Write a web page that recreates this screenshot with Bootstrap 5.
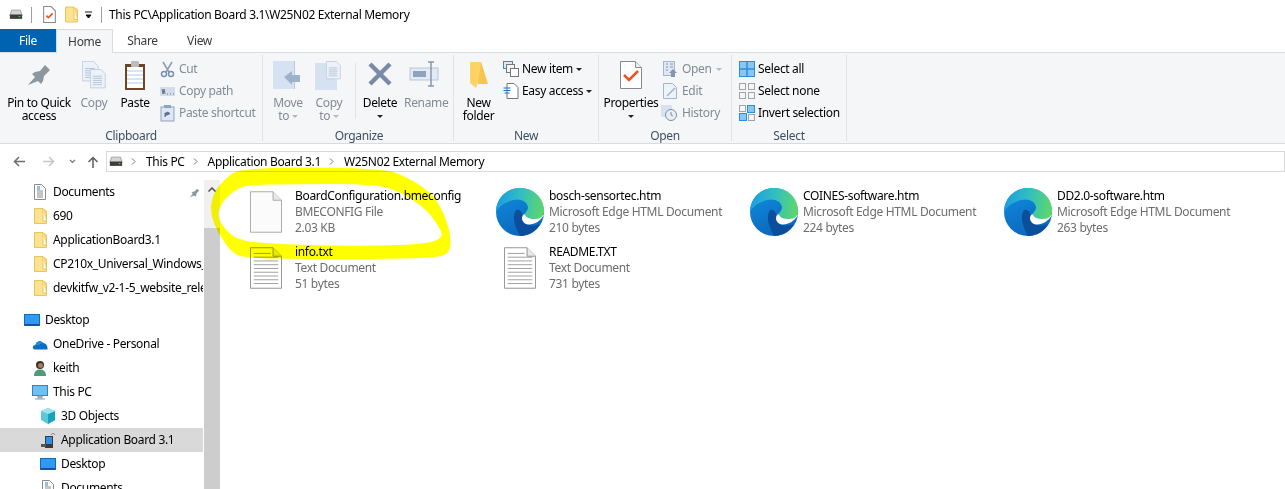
<!DOCTYPE html>
<html lang="en">
<head>
<meta charset="UTF-8">
<title>W25N02 External Memory</title>
<link rel="stylesheet" href="https://cdn.jsdelivr.net/npm/bootstrap@5.3.0/dist/css/bootstrap.min.css">
<style>
html, body { height: 489px; overflow: hidden; }
body { font-family: "Noto Sans", "Open Sans", sans-serif; font-size: 12px; letter-spacing: -.33px; color: #000; background: #fff; line-height: 16px; }
svg { display: block; flex: none; }

/* title bar */
.title-bar { height: 29px; padding-left: 9px; }
.title-sep { width: 1px; height: 16px; background: #a0a0a0; }
.qa-drive { margin-right: 8px; }
.qa-doc { margin-left: 11px; }
.qa-folder { margin-left: 9px; }
.qa-more { margin-left: 7px; }
.qa-sep { margin-left: 8px; }
.title-text { margin-left: 7px; }

/* tabs */
.tab-row { height: 24px; position: relative; z-index: 1; margin-bottom: -1px; }
.tab-item { height: 24px; line-height: 23px; text-align: center; color: #3b3b3b; }
.tab-file { width: 56px; height: 23px; background: #0063b1; color: #fff; }
.tab-home { width: 57px; background: #f5f6f7; border: 1px solid #dadbdc; border-bottom: 0; }
.tab-share { width: 59px; }
.tab-view { width: 55px; }

/* ribbon */
.ribbon { height: 92px; background: #f5f6f7; border-top: 1px solid #dadbdc; border-bottom: 1px solid #dadbdc; padding-top: 2px; }
.rib-group { height: 86px; border-right: 1px solid #e1e3e6; flex: none; }
.rib-body { height: 73px; }
.rib-label { height: 16px; line-height: 15px; text-align: center; color: #3f4f63; }
.big-btn { padding-top: 6px; line-height: 13px; text-align: center; flex: none; }
.big-icon { height: 35px; }
.bw-32 { width: 32px; } .bw-36 { width: 36px; } .bw-40 { width: 40px; } .bw-46 { width: 46px; }
.bw-48 { width: 48px; } .bw-49 { width: 49px; } .bw-50 { width: 50px; } .bw-64 { width: 64px; } .bw-78 { width: 78px; }
.off { color: #838b96; }
.caret-dn { width: 0; height: 0; border-left: 3px solid transparent; border-right: 3px solid transparent; border-top: 3px solid #222; display: inline-block; vertical-align: middle; }
.off .caret-dn { border-top-color: #b5b9bf; }
.small-col { padding-top: 3px; flex: none; }
.small-row { height: 22px; gap: 4px; white-space: nowrap; }
.tight-row { gap: 3px; }
.hist-row { margin-left: -2px; }
.inner-sep { width: 1px; height: 56px; margin-top: 8px; margin-left: 8px; background: #e1e3e6; flex: none; }
.g-clip { width: 263px; }
.g-org { width: 191px; padding-left: 2px; }
.g-new { width: 145px; }
.g-open { width: 133px; }
.g-sel { width: 115px; }
.sel-body { padding-left: 7px; }

/* address bar */
.addr-row { height: 33px; padding-top: 7px; }
.nav-btns { width: 106px; height: 21px; padding-left: 13px; flex: none; }
.nav-fwd { margin-left: 18px; }
.nav-more { margin-left: 14px; }
.nav-up { margin-left: 11px; }
.addr-box { height: 21px; border: 1px solid #d9d9d9; padding-left: 2px; }
.crumb-sep { width: 5px; height: 7px; margin: 0 10px 0 8px; }

/* main area */
.main-area { height: 312px; }
.side-pane { width: 204px; padding-top: 3px; overflow: hidden; flex: none; }
.side-row { height: 24px; width: 203px; white-space: nowrap; overflow: hidden; gap: 5px; }
.side-ico { width: 16px; flex: none; display: flex; justify-content: center; }
.lvl-0 { padding-left: 24px; }
.lvl-1 { padding-left: 32px; }
.lvl-2 { padding-left: 40px; }
.side-gap { height: 8px; }
.side-sel { background: #d9d9d9; }
.pin-mark { margin-left: auto; margin-right: 3px; }
.scroll-bar { width: 16px; margin-top: 3px; background: #f0f0f0; flex: none; }
.scroll-up { height: 18px; }
.scroll-blank { height: 30px; }
.scroll-thumb { flex: 1; background: #cdcdcd; }
.file-pane { padding: 11px 0 0 22px; display: grid; grid-template-columns: repeat(4, 254px); grid-auto-rows: 56px; }
.file-tile { gap: 5px; height: 48px; }
.file-icon { width: 48px; height: 48px; }
.file-meta { color: #6d6d6d; }

.marker { position: absolute; left: 0; top: 0; mix-blend-mode: multiply; pointer-events: none; }
</style>
</head>
<body>
<svg width="0" height="0" class="position-absolute">
  <defs>
    <linearGradient id="edgeTop" x1="0" y1="0.5" x2="1" y2="0.6">
      <stop offset="0" stop-color="#1b9de2"/><stop offset=".5" stop-color="#33bfc0"/><stop offset="1" stop-color="#5fd768"/>
    </linearGradient>
    <linearGradient id="edgeLeft" x1="0" y1="0" x2="0.4" y2="1">
      <stop offset="0" stop-color="#0f8fdf"/><stop offset="1" stop-color="#0c68bd"/>
    </linearGradient>
    <symbol id="ic-drive" viewBox="0 0 16 12">
      <path d="M3 1h10l2 6H1z" fill="#d5d5d5" stroke="#9c9c9c"/>
      <rect x="1" y="6" width="14" height="5" fill="#3d3d3d"/>
      <rect x="11" y="8" width="2" height="1" fill="#5fe05f"/>
    </symbol>
    <symbol id="ic-folder" viewBox="0 0 13 16">
      <path d="M.5.5h8.500v12.500l3.500 0v2.500H.5z" fill="#fde28f" stroke="#e8c45e"/>
      <path d="M9 1l3.500 2v12" fill="#f8d775" stroke="#e8c45e"/>
    </symbol>
    <symbol id="ic-doc" viewBox="0 0 12 16">
      <path d="M.5.5h7l4 4v11H.5z" fill="#fff" stroke="#8a8a8a"/>
      <path d="M3 7h6M3 9h6M3 11h6M3 13h6" stroke="#8a8a8a"/>
      <path d="M3 3h3M3 5h3" stroke="#2a7cc7"/>
    </symbol>
    <symbol id="ic-desk" viewBox="0 0 16 12">
      <rect x=".5" y=".5" width="15" height="11" fill="#2e9bf0" stroke="#0a6dc0"/>
      <rect x="1" y="10" width="14" height="1.500" fill="#0b4f8f"/>
    </symbol>
    <symbol id="ic-pin" viewBox="0 0 24 26">
      <path d="M1 24l7-8-3-3 3-2 5-1 5-6 5 5-6 6-1 5-2 3-3-3z" fill="#8b969f"/>
    </symbol>
    <symbol id="ic-file" viewBox="0 0 34 44">
      <path d="M.5.5h24l9 9v34H.500z" fill="#fbfbfb" stroke="#a5a5a5"/>
      <path d="M24.500.5v9h9" fill="#e8e8e8" stroke="#a5a5a5"/>
    </symbol>
    <symbol id="ic-text" viewBox="0 0 34 44">
      <path d="M.5.5h24l9 9v34H.500z" fill="#fff" stroke="#8f8f8f"/>
      <path d="M24.500.5v9h9" fill="#e8e8e8" stroke="#8f8f8f"/>
      <path d="M4 6.500h18M4 10.500h26M4 14.500h26M4 18.500h26M4 22.500h26M4 26.500h26M4 30.500h26M4 34.500h26M4 38.500h26" stroke="#9b9b9b"/>
    </symbol>
    <symbol id="ic-edge" viewBox="0 0 48 48">
      <circle cx="24" cy="24" r="24" fill="url(#edgeLeft)"/>
      <path d="M20 22C25 21 27 26 27 30C28 36 35 40 44 36C40 43 33 48 24 48C20 40 15 30 20 22Z" fill="#0b4f9c"/>
      <path d="M48 27C44 34 36 38 30 36C26 34 25 30 27 27C33 24 42 28 48 27Z" fill="#fff"/>
      <path d="M0 24C0 10 11 0 24 0C38 0 48 10 48 23C48 28 45 31 39 31C33 31 29 29 29 26C29 24 32 23 32 19C31 13 24 10 17 12C9 14 3 18 0 24Z" fill="url(#edgeTop)"/>
    </symbol>
    <symbol id="ic-page-blue" viewBox="0 0 24 28">
      <path d="M.5.5h15l6 6v20H.500z" fill="#edf2f9" stroke="#b4c4dc"/>
      <path d="M4 10h13M4 13h13M4 16h13M4 19h13M4 22h13" stroke="#9fb3cf"/>
    </symbol>
    <symbol id="ic-panel" viewBox="0 0 26 28">
      <rect width="22" height="28" fill="#d6e2f1"/><rect width="1" height="28" x="21" fill="#b8cae0"/>
    </symbol>
    <symbol id="ic-chev" viewBox="0 0 5 7">
      <path d="M1 .5l3 3-3 3" fill="none" stroke="#777"/>
    </symbol>
  </defs>
</svg>

<div class="title-bar d-flex align-items-center">
  <svg width="14" height="11" class="qa-drive"><use href="#ic-drive"/></svg>
  <span class="title-sep"></span>
  <svg width="13" height="17" viewBox="0 0 12 16" class="qa-doc"><path d="M.5.5h7l4 4v11H.5z" fill="#fff" stroke="#8a8a8a"/><path d="M3 9l2 2 4-4" fill="none" stroke="#e8541e" stroke-width="1.500"/></svg>
  <svg width="13" height="17" class="qa-folder"><use href="#ic-folder"/></svg>
  <svg width="8" height="8" viewBox="0 0 8 8" class="qa-more"><path d="M0 1h7M1 4h5l-2.500 3z" stroke="#111" fill="#111"/></svg>
  <span class="title-sep qa-sep"></span>
  <span class="title-text">This PC\Application Board 3.1\W25N02 External Memory</span>
</div>

<div class="tab-row d-flex">
  <div class="tab-item tab-file">File</div>
  <div class="tab-item tab-home">Home</div>
  <div class="tab-item tab-share">Share</div>
  <div class="tab-item tab-view">View</div>
</div>

<div class="ribbon d-flex">
  <div class="rib-group g-clip">
    <div class="rib-body d-flex">
      <div class="big-btn bw-78">
        <div class="big-icon d-flex justify-content-center"><svg width="24" height="26"><use href="#ic-pin"/></svg></div>
        Pin to Quick<br>access
      </div>
      <div class="big-btn off bw-32">
        <div class="big-icon d-flex justify-content-center"><svg width="24" height="28" viewBox="0 0 24 28"><use href="#ic-page-blue" width="18" height="21"/><use href="#ic-page-blue" x="8" y="8" width="17" height="20"/></svg></div>
        Copy
      </div>
      <div class="big-btn bw-50">
        <div class="big-icon d-flex justify-content-center"><svg width="22" height="30" viewBox="0 0 22 30"><rect x="1" y="3" width="20" height="26" fill="#6b4728"/><rect x="3" y="6" width="16" height="21" fill="#fff"/><path d="M3 10h16M3 14h16M3 18h16M3 22h16" stroke="#a8cbed"/><rect x="7" y="0" width="8" height="6" rx="1" fill="#bcbcbc"/></svg></div>
        Paste
      </div>
      <div class="small-col off">
        <div class="small-row d-flex align-items-center"><svg width="15" height="17" viewBox="0 0 15 17"><path d="M3 1l6 10M12 1l-6 10" stroke="#8a9bb5" stroke-width="1.500"/><circle cx="4" cy="13" r="2.500" fill="none" stroke="#7b8fb0" stroke-width="1.500"/><circle cx="11" cy="13" r="2.500" fill="none" stroke="#7b8fb0" stroke-width="1.500"/></svg>Cut</div>
        <div class="small-row d-flex align-items-center"><svg width="15" height="9" viewBox="0 0 15 9"><rect width="15" height="9" fill="#d2deee"/><path d="M2 2l1 5 1-5 1 5M7 7h1M10 7h1M13 7h1" stroke="#556" fill="none" stroke-width=".8"/></svg>Copy path</div>
        <div class="small-row d-flex align-items-center"><svg width="15" height="17" viewBox="0 0 15 17"><rect x="1" y="2" width="13" height="14" fill="#dde6f2" stroke="#8fa3bf"/><rect x="4" y="0" width="7" height="3" fill="#8fa3bf"/><path d="M5 12V8h4M7 7l3 1.500L7 10z" fill="#5c708c" stroke="#5c708c"/></svg>Paste shortcut</div>
      </div>
    </div>
    <div class="rib-label">Clipboard</div>
  </div>

  <div class="rib-group g-org">
    <div class="rib-body d-flex">
      <div class="big-btn off bw-46">
        <div class="big-icon d-flex justify-content-center"><svg width="30" height="30" viewBox="0 0 30 30"><use href="#ic-panel" width="26" height="28"/><path d="M11 16l8-6v4h8v7h-8v3z" fill="#9fb2cc"/></svg></div>
        Move<br>to <span class="caret-dn"></span>
      </div>
      <div class="big-btn off bw-36">
        <div class="big-icon d-flex justify-content-center"><svg width="28" height="30" viewBox="0 0 28 30"><rect y="2" width="22" height="27" fill="#d6e2f1"/><use href="#ic-page-blue" x="11" y="0" width="16" height="19"/></svg></div>
        Copy<br>to <span class="caret-dn"></span>
      </div>
      <div class="inner-sep"></div>
      <div class="big-btn bw-48">
        <div class="big-icon d-flex justify-content-center"><svg width="26" height="26" viewBox="0 0 26 26"><path d="M3 3l20 20M23 3L3 23" stroke="#7a8aa8" stroke-width="4.500"/></svg></div>
        Delete<br><span class="caret-dn"></span>
      </div>
      <div class="big-btn off bw-40">
        <div class="big-icon d-flex justify-content-center"><svg width="30" height="26" viewBox="0 0 30 26"><rect x="1" y="7" width="28" height="12" fill="#e2eaf5" stroke="#b8c6da"/><rect x="4" y="10" width="13" height="6" fill="#8fa2bf"/><path d="M19 1h6M22 1v24M19 25h6" stroke="#8a96a8" stroke-width="1.500"/></svg></div>
        Rename
      </div>
    </div>
    <div class="rib-label">Organize</div>
  </div>

  <div class="rib-group g-new">
    <div class="rib-body d-flex">
      <div class="big-btn bw-49">
        <div class="big-icon d-flex justify-content-center"><svg width="20" height="28" viewBox="0 0 20 28"><path d="M1 1h11l6 20h-9l-2 6-6-5z" fill="#fcd466"/><path d="M12 1l7 22H9z" fill="#f5c453"/></svg></div>
        New<br>folder
      </div>
      <div class="small-col">
        <div class="small-row tight-row d-flex align-items-center"><svg width="16" height="16" viewBox="0 0 16 16"><rect x=".5" y=".5" width="9" height="7" fill="#dbe9f7" stroke="#3b87c8"/><rect x="3.500" y="3.500" width="8" height="8" fill="#f4f4f4" stroke="#777"/><rect x="7.500" y="7.500" width="8" height="8" fill="#fff" stroke="#777"/></svg>New item <span class="caret-dn"></span></div>
        <div class="small-row tight-row d-flex align-items-center"><svg width="16" height="16" viewBox="0 0 15 16"><path d="M3.500.5h7l4 4v11h-11z" fill="#fff" stroke="#777"/><path d="M0 5h7M0 7.500h7M1 10h5" stroke="#1d6fb8"/></svg>Easy access <span class="caret-dn"></span></div>
      </div>
    </div>
    <div class="rib-label">New</div>
  </div>

  <div class="rib-group g-open">
    <div class="rib-body d-flex">
      <div class="big-btn bw-64">
        <div class="big-icon d-flex justify-content-center"><svg width="22" height="28" viewBox="0 0 22 28"><path d="M.5.5h15l6 6v21H.500z" fill="#fff" stroke="#8a8a8a"/><path d="M15.500.5v6h6" fill="#eee" stroke="#8a8a8a"/><path d="M4 14l5 5 9-9" fill="none" stroke="#e8541e" stroke-width="2.500"/></svg></div>
        Properties<br><span class="caret-dn"></span>
      </div>
      <div class="small-col off">
        <div class="small-row d-flex align-items-center"><svg width="15" height="16" viewBox="0 0 15 16"><rect x=".5" y=".5" width="11" height="14" fill="#dfe7f2" stroke="#a5b5cb"/><path d="M3 3h2M3 6h2M3 9h2M7 3h3M7 6h3" stroke="#8296b3"/><path d="M8 16v-4H6l4-4 4 4h-2v4z" fill="#8296b3"/></svg>Open <span class="caret-dn"></span></div>
        <div class="small-row d-flex align-items-center"><svg width="15" height="16" viewBox="0 0 15 16"><path d="M.5.5h9l4 4v11H.500z" fill="#eef3fa" stroke="#a5b5cb"/><path d="M4 13l8-8" stroke="#9fb2cc" stroke-width="1.500"/></svg>Edit</div>
        <div class="small-row hist-row d-flex align-items-center"><svg width="17" height="16" viewBox="0 0 17 16"><rect y="0" width="11" height="12" fill="#d6e2f1"/><circle cx="10" cy="10" r="5.500" fill="#e9eef5" stroke="#7f8ea3"/><path d="M10 7v3l2 1" stroke="#7f8ea3" fill="none"/></svg>History</div>
      </div>
    </div>
    <div class="rib-label">Open</div>
  </div>

  <div class="rib-group g-sel">
    <div class="rib-body sel-body d-flex">
      <div class="small-col">
        <div class="small-row tight-row d-flex align-items-center"><svg width="16" height="16" viewBox="0 0 16 16"><rect x=".5" y=".5" width="15" height="15" fill="#8cc4f2" stroke="#2a8ee0"/><path d="M8 0v16M0 8h16" stroke="#2a8ee0" stroke-width="1.500"/></svg>Select all</div>
        <div class="small-row tight-row d-flex align-items-center"><svg width="16" height="16" viewBox="0 0 16 16" fill="none" stroke="#a3a3a3"><rect x=".5" y=".5" width="6" height="6"/><rect x="9.500" y=".5" width="6" height="6"/><rect x=".5" y="9.500" width="6" height="6"/><rect x="9.500" y="9.500" width="6" height="6"/></svg>Select none</div>
        <div class="small-row tight-row d-flex align-items-center"><svg width="16" height="16" viewBox="0 0 16 16"><rect x=".5" y=".5" width="6" height="6" fill="none" stroke="#a3a3a3"/><rect x="8.500" y=".5" width="7" height="7" fill="#8cc4f2" stroke="#2a8ee0"/><rect x=".5" y="8.500" width="7" height="7" fill="#8cc4f2" stroke="#2a8ee0"/><rect x="9.500" y="9.500" width="6" height="6" fill="none" stroke="#a3a3a3"/></svg>Invert selection</div>
      </div>
    </div>
    <div class="rib-label">Select</div>
  </div>
</div>

<div class="addr-row d-flex">
  <div class="nav-btns d-flex align-items-center">
    <svg width="12" height="11" viewBox="0 0 12 11"><path d="M12 5.500H1.500M6 1L1.500 5.500 6 10" fill="none" stroke="#6d6d6d" stroke-width="1.500"/></svg>
    <svg width="12" height="11" viewBox="0 0 12 11" class="nav-fwd"><path d="M0 5.500h10.500M6 1l4.500 4.500L6 10" fill="none" stroke="#c6c6c6" stroke-width="1.500"/></svg>
    <svg width="7" height="5" viewBox="0 0 7 5" class="nav-more"><path d="M1 1l2.500 2.500L6 1" fill="none" stroke="#777" stroke-width="1.200"/></svg>
    <svg width="12" height="12" viewBox="0 0 11 12" class="nav-up"><path d="M5.500 12V1.500M1 6l4.500-4.500L10 6" fill="none" stroke="#5e5e5e" stroke-width="1.500"/></svg>
  </div>
  <div class="addr-box flex-grow-1 d-flex align-items-center">
    <svg width="14" height="11"><use href="#ic-drive"/></svg>
    <svg class="crumb-sep"><use href="#ic-chev"/></svg>
    <span>This PC</span>
    <svg class="crumb-sep"><use href="#ic-chev"/></svg>
    <span>Application Board 3.1</span>
    <svg class="crumb-sep"><use href="#ic-chev"/></svg>
    <span>W25N02 External Memory</span>
  </div>
</div>

<div class="main-area d-flex">
  <div class="side-pane">
    <div class="side-row lvl-1 d-flex align-items-center"><span class="side-ico"><svg width="12" height="16"><use href="#ic-doc"/></svg></span><span>Documents</span><svg class="pin-mark" width="11" height="11"><use href="#ic-pin"/></svg></div>
    <div class="side-row lvl-1 d-flex align-items-center"><span class="side-ico"><svg width="13" height="16"><use href="#ic-folder"/></svg></span><span>690</span></div>
    <div class="side-row lvl-1 d-flex align-items-center"><span class="side-ico"><svg width="13" height="16"><use href="#ic-folder"/></svg></span><span>ApplicationBoard3.1</span></div>
    <div class="side-row lvl-1 d-flex align-items-center"><span class="side-ico"><svg width="13" height="16"><use href="#ic-folder"/></svg></span><span>CP210x_Universal_Windows_Driver</span></div>
    <div class="side-row lvl-1 d-flex align-items-center"><span class="side-ico"><svg width="13" height="16"><use href="#ic-folder"/></svg></span><span>devkitfw_v2-1-5_website_release</span></div>
    <div class="side-gap"></div>
    <div class="side-row lvl-0 d-flex align-items-center"><span class="side-ico"><svg width="16" height="12"><use href="#ic-desk"/></svg></span><span>Desktop</span></div>
    <div class="side-row lvl-1 d-flex align-items-center"><span class="side-ico"><svg width="16" height="11" viewBox="0 0 16 11"><path d="M3 10.500C0 10.500 0 6 3.500 6 4 2 9 1 11 4c3 0 5 3 4.500 6.500z" fill="#0f6cc4"/><path d="M3.500 6C4 2 9 1 11 4 9 4 8 5 7.500 6z" fill="#1b8fe0"/></svg></span><span>OneDrive - Personal</span></div>
    <div class="side-row lvl-1 d-flex align-items-center"><span class="side-ico"><svg width="14" height="16" viewBox="0 0 14 16"><circle cx="7" cy="5" r="4" fill="#3a3028"/><circle cx="7.500" cy="5.500" r="2.500" fill="#a87b5a"/><path d="M1 16c0-5 3-6.500 6-6.500s6 1.500 6 6.500z" fill="#4f9a7a"/></svg></span><span>keith</span></div>
    <div class="side-row lvl-1 d-flex align-items-center"><span class="side-ico"><svg width="16" height="15" viewBox="0 0 16 15"><rect x=".5" y=".5" width="15" height="10" fill="#6cc0f2" stroke="#3d7fae"/><path d="M6 11h4v2H6zM3 14h10" stroke="#8f9aa5" fill="#b7c2cc"/></svg></span><span>This PC</span></div>
    <div class="side-row lvl-2 d-flex align-items-center"><span class="side-ico"><svg width="16" height="16" viewBox="0 0 16 16"><path d="M8 0l7 3v9l-7 4-7-4V3z" fill="#5ac8d8"/><path d="M8 6l7-3v9l-7 4z" fill="#17a3bd"/><path d="M8 6L1 3l7-3 7 3z" fill="#9de3ea"/></svg></span><span>3D Objects</span></div>
    <div class="side-row lvl-2 side-sel d-flex align-items-center"><span class="side-ico"><svg width="16" height="16" viewBox="0 0 16 16"><rect x="5" y="4" width="8" height="12" fill="#3a3a3a"/><rect x="6" y="5" width="6" height="7" fill="#2e90e8"/><rect x="1" y="12" width="5" height="3" fill="#555"/><path d="M11 3c1-2 3-2 4 0" stroke="#777" fill="none"/></svg></span><span>Application Board 3.1</span></div>
    <div class="side-row lvl-2 d-flex align-items-center"><span class="side-ico"><svg width="16" height="12"><use href="#ic-desk"/></svg></span><span>Desktop</span></div>
    <div class="side-row lvl-2 d-flex align-items-center"><span class="side-ico"><svg width="12" height="16"><use href="#ic-doc"/></svg></span><span>Documents</span></div>
  </div>
  <div class="scroll-bar d-flex flex-column">
    <div class="scroll-up d-flex justify-content-center align-items-center"><svg width="8" height="5" viewBox="0 0 8 5"><path d="M.5 4.500L4 1l3.500 3.500" fill="none" stroke="#505050" stroke-width="1.500"/></svg></div>
    <div class="scroll-blank"></div>
    <div class="scroll-thumb"></div>
  </div>
  <div class="file-pane flex-grow-1">
    <div class="file-tile d-flex">
      <div class="file-icon d-flex justify-content-center align-items-center"><svg width="32" height="42"><use href="#ic-file"/></svg></div>
      <div><div>BoardConfiguration.bmeconfig</div><div class="file-meta">BMECONFIG File</div><div class="file-meta">2.03 KB</div></div>
    </div>
    <div class="file-tile d-flex">
      <div class="file-icon"><svg width="48" height="48"><use href="#ic-edge"/></svg></div>
      <div><div>bosch-sensortec.htm</div><div class="file-meta">Microsoft Edge HTML Document</div><div class="file-meta">210 bytes</div></div>
    </div>
    <div class="file-tile d-flex">
      <div class="file-icon"><svg width="48" height="48"><use href="#ic-edge"/></svg></div>
      <div><div>COINES-software.htm</div><div class="file-meta">Microsoft Edge HTML Document</div><div class="file-meta">224 bytes</div></div>
    </div>
    <div class="file-tile d-flex">
      <div class="file-icon"><svg width="48" height="48"><use href="#ic-edge"/></svg></div>
      <div><div>DD2.0-software.htm</div><div class="file-meta">Microsoft Edge HTML Document</div><div class="file-meta">263 bytes</div></div>
    </div>
    <div class="file-tile d-flex">
      <div class="file-icon d-flex justify-content-center align-items-center"><svg width="32" height="42"><use href="#ic-text"/></svg></div>
      <div><div>info.txt</div><div class="file-meta">Text Document</div><div class="file-meta">51 bytes</div></div>
    </div>
    <div class="file-tile d-flex">
      <div class="file-icon d-flex justify-content-center align-items-center"><svg width="32" height="42"><use href="#ic-text"/></svg></div>
      <div><div>README.TXT</div><div class="file-meta">Text Document</div><div class="file-meta">731 bytes</div></div>
    </div>
  </div>
</div>

<svg class="marker" width="1285" height="489" viewBox="0 0 1285 489">
  <path fill="#ffff00" fill-rule="evenodd" d="M271.500 168Q305 167 345 168Q385 169 396 173Q407 177 419.500 185Q432 193 438.500 204Q445 215 448 226Q451 237 450.500 244.500Q450 252 444 255Q438 258 405 258.500Q372 259 338.500 259Q305 259 275 258.500Q245 258 238.500 255.500Q232 253 225 243Q218 233 214 223Q210 213 211.500 203Q213 193 219 186Q225 179 231.500 174Q238 169 271.500 168ZM244 186.500Q250 185 269 184.500Q288 184 333 184Q378 184 390 188.500Q402 193 413.500 200.500Q425 208 431.500 216.500Q438 225 441 231.500Q444 238 433 241.500Q422 245 380 245.500Q338 246 308 245Q278 244 258 242.500Q238 241 230.500 234Q223 227 220 221Q217 215 220 207.500Q223 200 230.500 194Q238 188 244 186.500Z"/>
</svg>
<script src="https://cdn.jsdelivr.net/npm/bootstrap@5.3.0/dist/js/bootstrap.bundle.min.js"></script>
</body>
</html>
